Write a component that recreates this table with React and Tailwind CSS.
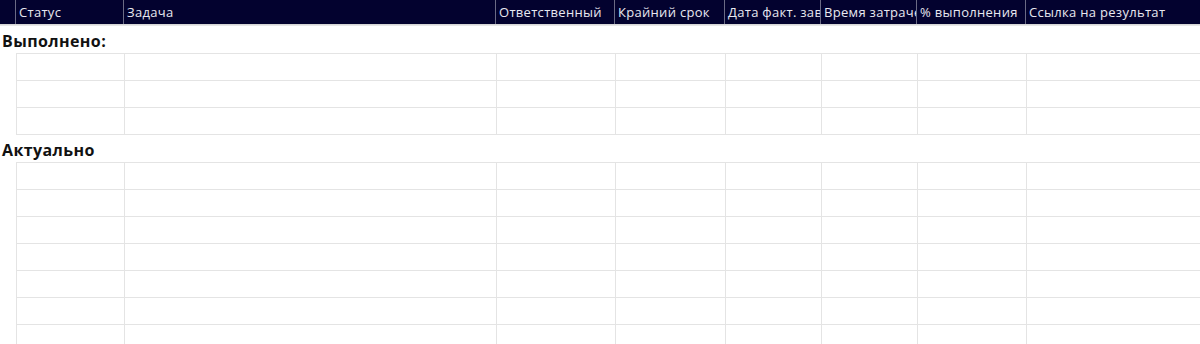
const columns = [
  { title: "Статус", w: "w-[108px]" },
  { title: "Задача", w: "w-[372px]" },
  { title: "Ответственный", w: "w-[119px]" },
  { title: "Крайний срок", w: "w-[110px]" },
  { title: "Дата факт. завершения", w: "w-[96px]" },
  { title: "Время затраченное", w: "w-[96px]" },
  { title: "% выполнения", w: "w-[109px]" },
  { title: "Ссылка на результат", w: "flex-1" },
];

function Section({ title, rows }) {
  return (
    <div>
      <div className="h-[27px] flex items-end pl-[2px] text-[16px] tracking-[0.4px] font-bold text-[#111]">
        {title}
      </div>
      <div className="ml-[16px]">
        {Array.from({ length: rows }).map((_, i) => (
          <div key={i} className="flex h-[27px] border-t border-[#e4e4e4]">
            {columns.map((c, j) => (
              <div key={j} className={`${c.w} shrink-0 border-l border-[#e4e4e4]`} />
            ))}
          </div>
        ))}
        <div className="border-t border-[#e4e4e4]" />
      </div>
    </div>
  );
}

export default function App() {
  return (
    <div
      className="w-[1200px] h-[344px] overflow-hidden bg-white"
      style={{ fontFamily: "'Open Sans', 'DejaVu Sans', sans-serif" }}
    >
      {/* header bar */}
      <div className="flex h-[24px] bg-[#03022f] text-[#e8e8f0] text-[13px] tracking-[0.3px] leading-[24px]">
        <div className="w-[16px] shrink-0 border-r border-[#6b6b85]" />
        {columns.map((c, i) => (
          <div
            key={i}
            className={`${c.w} shrink-0 ${i < columns.length - 1 ? "border-r border-[#6b6b85]" : ""} pl-[3px] overflow-hidden whitespace-nowrap`}
          >
            {c.title}
          </div>
        ))}
      </div>
      <div className="h-[2px] bg-gradient-to-b from-[#cfcfcf] to-[#eeeeee]" />

      <Section title="Выполнено:" rows={3} />
      <Section title="Актуально" rows={7} />
    </div>
  );
}
